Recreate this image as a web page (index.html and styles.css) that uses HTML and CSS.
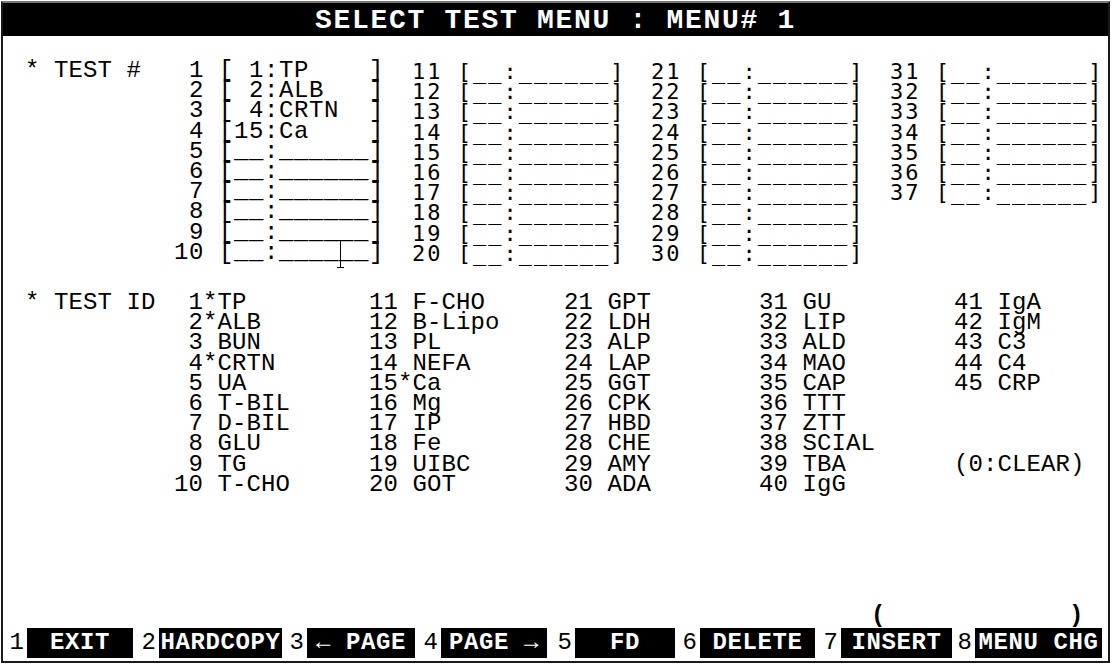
FILE: index.html
```html
<!DOCTYPE html>
<html lang="en">
  <head>
    <meta charset="UTF-8" />
    <title>Select Test Menu</title>
    <link rel="stylesheet" href="styles.css">
  </head>
  <body>
    <div class="screen">
      <div class="title">SELECT TEST MENU : MENU# 1</div>

      <div class="menu">
        <!-- test slots of the menu -->
        <div class="row-tn">
          <div class="col label">* TEST #</div>
          <div class="col col-main"> 1 [ 1:TP    ]
 2 [ 2:ALB   ]
 3 [ 4:CRTN  ]
 4 [15:Ca    ]
 5 [__:______]
 6 [__:______]
 7 [__:______]
 8 [__:______]
 9 [__:______]
10 [__:______]<span class="ibeam"><svg width="9" height="28" viewBox="0 0 9 28"><path d="M1 0.5H8M4.5 0.5V27.5M1 27.5H8" stroke="#000" stroke-width="1" fill="none"/></svg></span></div>
          <div class="col col-side">11 [__:______]
12 [__:______]
13 [__:______]
14 [__:______]
15 [__:______]
16 [__:______]
17 [__:______]
18 [__:______]
19 [__:______]
20 [__:______]</div>
          <div class="col col-side">21 [__:______]
22 [__:______]
23 [__:______]
24 [__:______]
25 [__:______]
26 [__:______]
27 [__:______]
28 [__:______]
29 [__:______]
30 [__:______]</div>
          <div class="col col-side">31 [__:______]
32 [__:______]
33 [__:______]
34 [__:______]
35 [__:______]
36 [__:______]
37 [__:______]</div>
        </div>

        <!-- test id table -->
        <div class="row-id">
          <div class="col label">* TEST ID</div>
          <div class="col"> 1*TP
 2*ALB
 3 BUN
 4*CRTN
 5 UA
 6 T-BIL
 7 D-BIL
 8 GLU
 9 TG
10 T-CHO</div>
          <div class="col">11 F-CHO
12 B-Lipo
13 PL
14 NEFA
15*Ca
16 Mg
17 IP
18 Fe
19 UIBC
20 GOT</div>
          <div class="col">21 GPT
22 LDH
23 ALP
24 LAP
25 GGT
26 CPK
27 HBD
28 CHE
29 AMY
30 ADA</div>
          <div class="col">31 GU
32 LIP
33 ALD
34 MAO
35 CAP
36 TTT
37 ZTT
38 SCIAL
39 TBA
40 IgG</div>
          <div class="col">41 IgA
42 IgM
43 C3
44 C4
45 CRP



(0:CLEAR)</div>
        </div>
      </div>

      <!-- function keys -->
      <div class="keys">
        <span class="paren paren-open">(</span>
        <span class="paren paren-close">)</span>

        <span class="num">1</span><span class="key">EXIT</span>
        <span class="num">2</span><span class="key">HARDCOPY</span>
        <span class="num">3</span><span class="key">← PAGE</span>
        <span class="num">4</span><span class="key">PAGE →</span>
        <span class="num">5</span><span class="key">FD</span>
        <span class="num">6</span><span class="key">DELETE</span>
        <span class="num">7</span><span class="key">INSERT</span>
        <span class="num">8</span><span class="key">MENU CHG</span>
      </div>
    </div>
  </body>
</html>
```

FILE: styles.css
```css
body {
  margin: 0;
  background-color: #fff;
  color: #000;
  font-family: "Liberation Mono", "DejaVu Sans Mono", monospace;
}

.screen {
  margin: 1px 0 0 1px;
  width: 1109px;
  height: 662px;
  box-sizing: border-box;
  border: 2px solid #1a1a1a;
  border-top-color: #777;
  display: flex;
  flex-direction: column;
}

.title {
  height: 33px;
  box-sizing: border-box;
  padding-top: 2px;
  background-color: #000;
  color: #fff;
  font-size: 28px;
  font-weight: bold;
  line-height: 31px;
  letter-spacing: 1.7px;
  text-align: center;
}

.menu {
  padding: 25px 0 0 22px;
}

.row-tn {
  display: grid;
  grid-template-columns: 149px 238px 239px 239px 239px;
}

.row-id {
  display: grid;
  grid-template-columns: 149px 195px 195px 195px 195px 1fr;
  margin-top: 29px;
}

.col {
  white-space: pre;
  font-size: 24px;
  line-height: 20.2px;
  letter-spacing: 0.1px;
}

.col-main {
  position: relative;
  letter-spacing: 0.6px;
}

.col-side {
  margin-top: 1px;
  font-family: "DejaVu Sans Mono", monospace;
  font-size: 22px;
  letter-spacing: 2px;
}

/* mouse cursor left on the screen */
.ibeam {
  position: absolute;
  left: 162px;
  top: 179px;
  width: 9px;
  height: 28px;
}

.ibeam svg {
  display: block;
}

.keys {
  margin-top: auto;
  padding-bottom: 3px;
  display: grid;
  grid-template-columns: 24px 106px 26px 123px 25px 108px 26px 106px 28px 100px 25px 115px 26px 111px 23px 127px;
  grid-template-rows: 24px 30px;
  font-size: 24px;
}

.paren {
  grid-row: 1;
  font-weight: bold;
  line-height: 24px;
}

.paren-open {
  grid-column: 14;
  padding-left: 30px;
}

.paren-close {
  grid-column: 16;
  padding-left: 94px;
}

.num {
  grid-row: 2;
  padding-right: 3px;
  text-align: right;
  line-height: 30px;
}

.key {
  grid-row: 2;
  background-color: #000;
  color: #fff;
  font-weight: bold;
  line-height: 30px;
  letter-spacing: 0.6px;
  text-align: center;
  white-space: pre;
}
```
